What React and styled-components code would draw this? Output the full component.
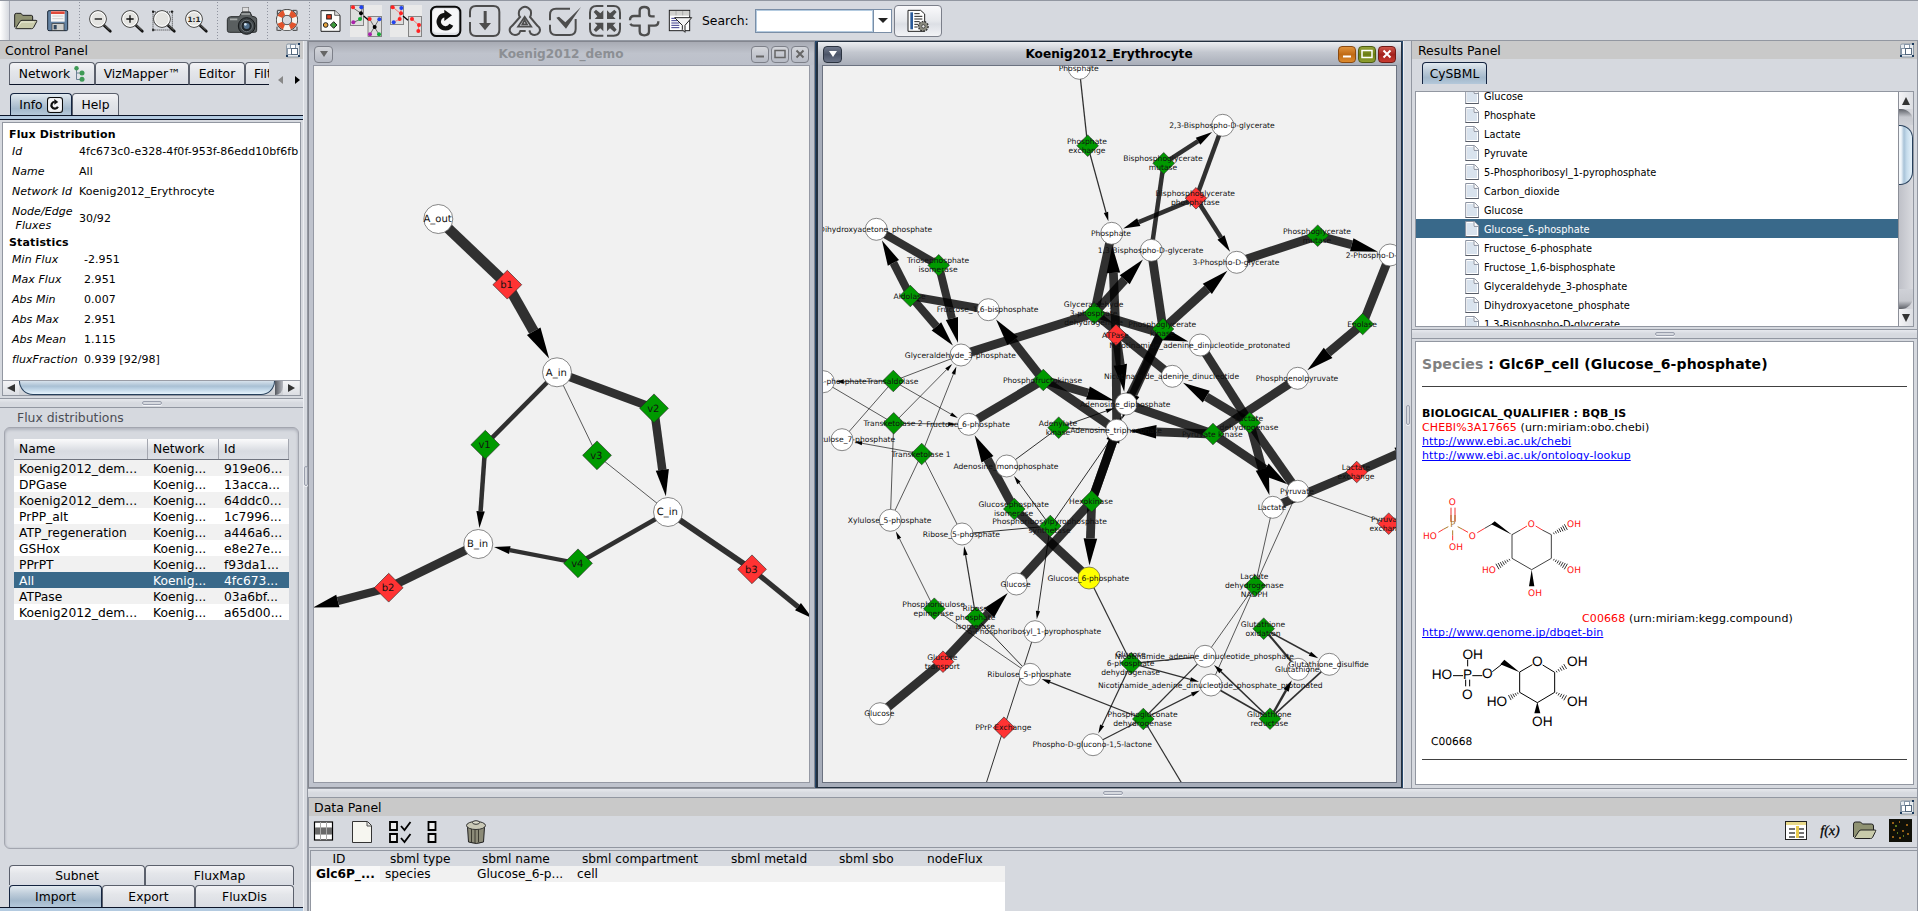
import React from "react";
import styled, { createGlobalStyle, css } from "styled-components";

const Global = createGlobalStyle`
  * { box-sizing: border-box; }
  html, body { margin: 0; background: #d6d9df; overflow: hidden; }
  body { font-family: "DejaVu Sans", sans-serif; font-size: 12.3px; color: #000; cursor: default; }
  svg { display: block; flex: none; }
  svg text { font-family: "DejaVu Sans", sans-serif; text-rendering: geometricPrecision; }
`;

const LINE = "#9297a1";
const SELECT = "#39698a";

/* ---------- frame ---------- */
const Page = styled.div`
  width: 1918px;
  height: 911px;
  display: flex;
  flex-direction: column;
  white-space: nowrap;
  overflow: hidden;
`;
const Body = styled.div`
  flex: 1;
  min-height: 0;
  display: flex;
`;
const Column = styled.div`
  display: flex;
  flex-direction: column;
  flex: 1;
  min-width: 0;
  border-right: 1px solid ${LINE};
`;
const TopArea = styled.div`
  display: flex;
  height: 747px;
`;
const VSplit = styled.div`
  width: ${(p) => p.$w}px;
  flex: none;
  display: flex;
  align-items: center;
  justify-content: center;
  background: #d6d9df;
  border-left: 1px solid #eceef2;
  border-right: 1px solid ${LINE};
`;
const HSplit = styled.div`
  height: ${(p) => p.$h}px;
  flex: none;
  display: flex;
  align-items: center;
  justify-content: center;
  background: linear-gradient(#e6e8ed, #d6d9df 4px);
  border-top: 1px solid ${LINE};
  border-bottom: 1px solid ${LINE};
`;
const Grip = styled.div`
  flex: none;
  border: 1px solid #9a9fad;
  border-radius: 2px;
  background: #d6d9df;
  box-shadow: 0 1px 0 #f4f5f8;
  ${(p) => (p.$v ? "width:4px;height:20px;" : "width:20px;height:4px;")}
`;

/* ---------- toolbar ---------- */
const Bar = styled.div`
  height: 41px;
  flex: none;
  display: flex;
  align-items: center;
  background: #d6d9df;
  border-top: 1px solid ${LINE};
  border-bottom: 1px solid ${LINE};
`;
const Handle = styled.div`
  width: 10px;
  height: 39px;
  background: linear-gradient(90deg, #fff, #d6d9df);
  border-right: 1px solid #a9adb8;
`;
const Separator = styled.div`
  width: 1px;
  height: 37px;
  background: repeating-linear-gradient(#8f939e 0 1px, transparent 1px 3px);
`;
const SearchLabel = styled.span`
  width: 59px;
  padding-left: 6px;
  font-size: 12.4px;
`;
const SearchInput = styled.div`
  width: 119px;
  height: 24px;
  background: #fff;
  border: 1px solid #7a8ea6;
  box-shadow: inset 0 0 0 1px #b4cbe0;
`;
const SearchDrop = styled.div`
  width: 18px;
  height: 24px;
  background: #fff;
  border: 1px solid #7a8ea6;
  border-left: 0;
  display: flex;
  align-items: center;
  justify-content: center;
`;
const ToolButton = styled.div`
  width: 48px;
  height: 32px;
  margin-left: 2px;
  border: 1px solid #7b7f8a;
  border-radius: 4px;
  background: linear-gradient(#fafafc, #e6e8ec 50%, #dcdfe5 60%, #f2f3f6);
  display: flex;
  align-items: center;
  justify-content: center;
`;

/* ---------- panels ---------- */
const PanelTitle = styled.div`
  height: ${(p) => p.$h || 18}px;
  flex: none;
  display: flex;
  align-items: center;
  justify-content: space-between;
  padding: 0 3px 0 ${(p) => p.$pl || 5}px;
  background: #c9c9c9;
  font-size: 12.5px;
`;
const Left = styled.div`
  width: 303px;
  flex: none;
  display: flex;
  flex-direction: column;
  overflow: hidden;
`;
const TabRow = styled.div`
  display: flex;
  flex: none;
  height: ${(p) => p.$h || 23}px;
  margin: ${(p) => p.$m || 0};
`;
const Tab = styled.div`
  width: ${(p) => p.$w}px;
  flex: none;
  display: flex;
  align-items: center;
  justify-content: center;
  gap: 4px;
  border: 1px solid #5b606c;
  border-bottom: ${(p) => (p.$open ? "0" : "1px solid #0c1428")};
  border-radius: 4px 4px 0 0;
  overflow: hidden;
  background: linear-gradient(#f3f3f6, #e4e6ea 40%, #d9dce3);
  ${(p) =>
    p.$on &&
    css`
      background: linear-gradient(#e2eaf0, #c0cedb 35%, #a3b8cb 70%, #b4c8da);
      border-color: #142440;
      border-bottom: 0;
    `}
  ${(p) =>
    p.$cut &&
    css`
      border-right: 0;
      border-radius: 4px 0 0 0;
      justify-content: flex-start;
      padding-left: 8px;
    `}
`;
const TabEdge = styled.div`
  height: 5px;
  flex: none;
  background: #b3cae0;
  border-top: 1px solid #0c1428;
  border-bottom: 1px solid #0c1428;
`;
const TabArrows = styled.div`
  display: flex;
  gap: 8px;
  padding: 14px 0 0 8px;
`;

const InfoBox = styled.div`
  width: 299px;
  height: 274px;
  margin: 2px 0 2px 2px;
  flex: none;
  border: 1px solid ${LINE};
  background: #fff;
  display: flex;
  flex-direction: column;
  font-size: 11px;
  overflow: hidden;
`;
const InfoText = styled.div`
  flex: 1;
  padding: 5px 0 0 6px;
`;
const InfoHead = styled.div`
  height: 14px;
  line-height: 14px;
  font-weight: bold;
  font-size: 11px;
  letter-spacing: 0.15px;
`;
const InfoRow = styled.div`
  display: flex;
  align-items: center;
  height: ${(p) => p.$h || 20}px;
  line-height: 14px;
  padding-left: 3px;
  letter-spacing: 0.05px;
`;
const InfoKey = styled.span`
  width: ${(p) => p.$w}px;
  font-style: italic;
  white-space: pre;
`;

const GroupTitle = styled.div`
  height: 19px;
  line-height: 19px;
  flex: none;
  padding-left: 17px;
  color: #4b4d55;
  font-size: 12.4px;
`;
const Group = styled.div`
  width: 295px;
  height: 422px;
  margin-left: 4px;
  flex: none;
  padding: 11px 0 0 9px;
  border: 1px solid #a3a6af;
  border-radius: 6px;
  box-shadow: inset 0 2px 3px #b4b7c0, inset 0 0 2px #b4b7c0;
`;
const Table = styled.div`
  width: 275px;
`;
const Row = styled.div`
  display: grid;
  grid-template-columns: 134px 71px 70px;
  height: 16px;
  line-height: 16px;
  background: ${(p) => (p.$on ? SELECT : p.$odd ? "#fff" : "#f1f1f1")};
  color: ${(p) => (p.$on ? "#fff" : "#000")};
  span { padding: 1px 0 0 5px; }
`;
const HeadRow = styled(Row)`
  height: 21px;
  line-height: 19px;
  background: linear-gradient(#fbfbfc, #d8dbe1 60%, #dde0e6);
  border-bottom: 1px solid #70747f;
  span { border-right: 1px solid #a4a7b0; }
`;
const BottomTabs = styled.div`
  margin: 16px 0 0 9px;
  width: 286px;
`;

/* ---------- scrollbars ---------- */
const HScroll = styled.div`
  height: 15px;
  display: flex;
  align-items: stretch;
  border-top: 1px solid #9a9da6;
  background: linear-gradient(#e7e8eb, #cfd1d6);
`;
const HThumb = styled.div`
  width: 256px;
  border: 1px solid #27405c;
  border-top: 0;
  border-radius: 0 0 14px 14px;
  background: linear-gradient(#d7e2ec, #a9c0d4 40%, #bcd2e4 60%, #e6f3fc);
`;
const HShade = styled.div`
  width: 8px;
  background: linear-gradient(90deg, #55585f, #b9bbc2);
  border-radius: 0 0 8px 0;
`;
const ScrollBtn = styled.div`
  flex: none;
  display: flex;
  align-items: center;
  justify-content: center;
  ${(p) => (p.$v ? "height:17px;" : "width:16px;")}
  background: linear-gradient(${(p) => (p.$v ? "90deg," : "")} #f4f4f6, #dcdee3);
`;
const VScroll = styled.div`
  width: 15px;
  flex: none;
  display: flex;
  flex-direction: column;
  border-left: 1px solid #8c8f98;
  background: linear-gradient(90deg, #bfc1c8, #d9dadf);
`;
const VShade = styled.div`
  height: ${(p) => p.$h}px;
  background: linear-gradient(${(p) => (p.$up ? "0deg" : "180deg")}, #5d6067, #c6c8ce 8px, #cfd1d7);
  border-radius: ${(p) => (p.$up ? "0 0 12px 0" : "0 12px 0 0")};
`;
const VThumb = styled.div`
  height: 60px;
  border: 1px solid #27405c;
  border-left: 0;
  border-radius: 0 13px 13px 0;
  background: linear-gradient(90deg, #f2f7fb 0 2px, #a9c3d8 5px, #c6dcec 60%, #e4f1fa);
`;

/* ---------- internal windows ---------- */
const Desktop = styled.div`
  width: 1095px;
  flex: none;
  display: flex;
  background: #28486b;
`;
const Win = styled.div`
  width: ${(p) => p.$w}px;
  height: 747px;
  margin-right: ${(p) => (p.$active ? 0 : 1)}px;
  border: 1px solid ${(p) => (p.$active ? "#23303f" : "#83868f")};
  border-left-width: ${(p) => (p.$active ? 2 : 1)}px;
  border-radius: ${(p) => (p.$active ? "4px 4px 0 0" : "0")};
  background: ${(p) => (p.$active ? "#a7adba" : "#bfc3cd")};
  padding: 0 4px 4px;
`;
const WinTitle = styled.div`
  height: 23px;
  margin: 0 -4px;
  padding: 1px 5px 0;
  display: flex;
  align-items: center;
  background: ${(p) => (p.$active ? "linear-gradient(#eceef1, #c3c7cf 45%, #a9aeb9)" : "linear-gradient(#a8abb4, #bfc3cc 50%, #bcc0ca)")};
  span {
    flex: 1;
    text-align: center;
    font-weight: bold;
    font-size: 12.15px;
    padding-left: 38px;
    color: ${(p) => (p.$active ? "#000" : "#8c8f94")};
  }
`;
const WinBtn = styled.div`
  width: ${(p) => p.$w || 18}px;
  height: 17px;
  flex: none;
  margin-left: ${(p) => p.$ml || 0}px;
  border-radius: 4px;
  border: 1px solid ${(p) => p.$bd};
  background: ${(p) => p.$bg};
  display: flex;
  align-items: center;
  justify-content: center;
`;
const Canvas = styled.div`
  height: 718px;
  border: 1px solid ${(p) => (p.$active ? "#6b7280" : "#9599a4")};
  background: #f1f1f1;
  overflow: hidden;
`;

/* ---------- results ---------- */
const Results = styled.div`
  flex: 1;
  min-width: 0;
  display: flex;
  flex-direction: column;
`;
const TreeBox = styled.div`
  width: 499px;
  height: 236px;
  margin: 7px 0 2px 3px;
  flex: none;
  border: 1px solid ${LINE};
  background: #fff;
  display: flex;
  overflow: hidden;
`;
const Tree = styled.div`
  flex: 1;
  margin-top: -6px;
`;
const TreeRow = styled.div`
  height: 19px;
  display: flex;
  align-items: center;
  gap: 5px;
  padding: 1px 0 0 49px;
  font-size: 9.8px;
  background: ${(p) => (p.$on ? SELECT : "#fff")};
  color: ${(p) => (p.$on ? "#fff" : "#000")};
  span { padding-top: 1px; }
`;
const Detail = styled.div`
  width: 499px;
  height: 444px;
  margin: 2px 0 0 3px;
  flex: none;
  border: 1px solid ${LINE};
  background: #fff;
  padding: 13px 6px 0;
  font-size: 11px;
  line-height: 14px;
`;
const DetailTitle = styled.div`
  height: 19px;
  line-height: 19px;
  font-size: 14px;
  font-weight: bold;
  letter-spacing: 0.12px;
  white-space: pre;
  em { font-style: normal; color: #808080; }
`;
const Rule = styled.div`
  height: 1px;
  width: 485px;
  background: #404040;
  margin: ${(p) => p.$m};
`;
const Line = styled.div`
  height: 14px;
  letter-spacing: 0.1px;
  b { letter-spacing: 0.12px; }
  i { font-style: normal; color: #f00; }
`;
const Link = styled.a`
  color: #00f;
  text-decoration: underline;
  text-underline-offset: 1px;
  text-decoration-skip-ink: none;
`;
const Figure = styled.div`
  display: flex;
  align-items: flex-end;
  height: ${(p) => p.$h}px;
`;

/* ---------- data panel ---------- */
const Data = styled.div`
  flex: 1;
  display: flex;
  flex-direction: column;
  border-left: 1px solid ${LINE};
`;
const DataTools = styled.div`
  height: 32px;
  flex: none;
  display: flex;
  align-items: center;
  border-bottom: 1px solid ${LINE};
`;
const DataBody = styled.div`
  flex: 1;
  margin: 2px 0 0 1px;
  border-top: 1px solid ${LINE};
  border-left: 1px solid ${LINE};
`;
const DataGrid = styled.div`
  width: 694px;
  height: 60px;
  background: #fff;
`;
const DataRow = styled.div`
  display: grid;
  grid-template-columns: 69px 92px 100px 149px 108px 88px 88px;
  height: ${(p) => (p.$head ? 15 : 16)}px;
  line-height: 15px;
  font-size: 12.2px;
  background: ${(p) => (p.$head ? "#d6d9df" : "#f1f1f1")};
  span { padding: 1px 0 0 ${(p) => (p.$head ? 10 : 5)}px; }
  span:first-child {
    ${(p) => (p.$head ? "text-align:center;padding:1px 13px 0 0;" : "font-weight:bold;background:#f8f8f8;")}
  }
`;
const Spacer = styled.div`
  flex: 1;
`;

/* ---------- icons: each strip is drawn on a 3x grid ---------- */
const Icon = ({ x, w, y = 3, h = 117, children }) => (
  <svg width={w / 3} height={h / 3} viewBox={`${x} ${y} ${w} ${h}`}>{children}</svg>
);
const Lens = ({ cx, children }) => (
  <g>
    <path d={`M${cx + 17} 75L${cx + 37} 94`} stroke="#111" strokeWidth="8" strokeLinecap="round" />
    <path d={`M${cx + 19} 75L${cx + 35} 90`} stroke="#8a8a86" strokeWidth="2.5" />
    <circle cx={cx} cy="57" r="25" fill="#e4e4e1" stroke="#3a3a38" strokeWidth="3" />
    <circle cx={cx} cy="57" r="21.500" fill="none" stroke="#fff" strokeWidth="3" />
    {children}
  </g>
);
const Dot = ({ x, y, c, r = 6 }) => <circle cx={x} cy={y} r={r} fill={c} />;
const CBadge = ({ x, y, s }) => (
  <g transform={`translate(${x} ${y}) scale(${s / 94})`}>
    <rect x="3" y="3" width="88" height="88" rx="16" fill="#dfe1e5" stroke="#0a0a0a" strokeWidth="6" />
    <rect x="9" y="9" width="76" height="72" rx="12" fill="#f6f6f8" />
    <path d="M64 57A20 20 0 1 1 45 28" fill="none" stroke="#111" strokeWidth="13" />
    <path d="M43 12L66 29L43 46Z" fill="#111" />
  </g>
);
const FloatIcon = () => (
  <svg width="14" height="15" viewBox="0 0 14 15">
    <rect x=".5" y="1" width="13" height="13" rx="1.500" fill="#e6eaee" stroke="#8c99a6" />
    <rect x="4.500" y="1.500" width="5" height="5" fill="#fff" stroke="#8797a8" />
    <rect x="1.500" y="5.500" width="5" height="6" fill="#fff" stroke="#8797a8" />
    <rect x="5.500" y="5.500" width="6" height="6" fill="#fff" stroke="#55697e" />
    <path d="M12 0h2v2h-2zM0 12h2v2H0zM12 12h2v2h-2z" fill="#1b3a5c" />
  </svg>
);
const Tri = ({ d, c = "#222", w = 8, h = 8 }) => (
  <svg width={w} height={h} viewBox="0 0 8 8"><path d={d} fill={c} /></svg>
);
const FileIcon = () => (
  <svg width="14" height="16" viewBox="0 0 14 16">
    <path d="M.7.5h8.800l4 4.200v10.800H.7z" fill="#fff" stroke="#8b92a0" />
    <path d="M2 2h6.500v4H12v8H2z" fill="#d9e3ee" />
    <path d="M9 1v4.400h4.200" fill="#fff" stroke="#8b92a0" />
    <path d="M.5 15.500h13.200" stroke="#565b66" />
  </svg>
);
const TreeIcon = () => (
  <svg width="11" height="16" viewBox="0 0 11 16">
    <path d="M2.500 2v11.500h5M2.500 7h5" fill="none" stroke="#6b8094" />
    <circle cx="2.500" cy="2.200" r="2.200" fill="#3f9a56" />
    <circle cx="8" cy="7" r="2.500" fill="#3f9a56" />
    <circle cx="8" cy="13.300" r="2.500" fill="#3f9a56" />
  </svg>
);

const G = "#4d4d4d";

function Toolbar() {
  return (
    <Bar>
      <Handle />
      <Icon x={30} w={96}>
        <path d="M44 82V45q0-5 5-5h14l5 6h26q4 0 4 5v12" fill="#8f9272" stroke="#222" strokeWidth="3" />
        <path d="M47 85L60 64q2-3 6-3h42q4 0 2 4l-9 17q-2 4-6 4H50q-4 0-3-1z" fill="#c9cbab" stroke="#222" strokeWidth="3" />
        <path d="M54 80l10-14h38" fill="none" stroke="#eceddb" strokeWidth="3" />
      </Icon>
      <Icon x={126} w={111}>
        <rect x="143" y="32" width="60" height="60" rx="4" fill="#6483a3" stroke="#1d2a3a" strokeWidth="3" />
        <rect x="153" y="33" width="41" height="32" fill="#f6f6f6" />
        <path d="M153 38h41" stroke="#e04a3b" strokeWidth="8" />
        <path d="M157 48h33M157 56h33" stroke="#b9b9b9" strokeWidth="2" />
        <rect x="156" y="71" width="36" height="20" fill="#cfd0cd" stroke="#333" strokeWidth="2" />
        <rect x="161" y="75" width="9" height="13" fill="#31475e" />
      </Icon>
      <Separator />
      <Icon x={240} w={108}><Lens cx={294}><path d="M284 57h22" stroke="#111" strokeWidth="4" /></Lens></Icon>
      <Icon x={348} w={96}><Lens cx={390}><path d="M379 57h22M390 46v22" stroke="#111" strokeWidth="4" /></Lens></Icon>
      <Icon x={444} w={96}>
        <rect x="459" y="36" width="58" height="54" fill="none" stroke="#111" strokeWidth="2.500" strokeDasharray="3 3" />
        <Lens cx={486} />
        <path d="M456 35h8M512 35h8M456 90h8M516 31v8M459 31v8M459 86v8" stroke="#111" strokeWidth="3" />
      </Icon>
      <Icon x={540} w={111}>
        <Lens cx={582}><text x="582" y="65" fontSize="22" fontWeight="bold" textAnchor="middle" fill="#222">1:1</text></Lens>
      </Icon>
      <Separator />
      <Icon x={654} w={147}>
        <rect x="728" y="22" width="18" height="14" fill="#ddd" stroke="#777" strokeWidth="2" />
        <path d="M726 36l-8 14h-26q-9 0-10 9v32q0 6 6 6h76q6 0 6-6V58q0-7-8-8l-6-1-6-13z" fill="#5a5f60" stroke="#2a2d2e" strokeWidth="3" />
        <path d="M690 58h22M724 42h26" stroke="#a9adac" strokeWidth="5" />
        <circle cx="740" cy="78" r="25" fill="#3e4447" stroke="#16191b" strokeWidth="3" />
        <circle cx="740" cy="78" r="17" fill="#20262a" stroke="#8c9498" strokeWidth="2" />
        <circle cx="740" cy="78" r="9" fill="#52708c" />
        <circle cx="736" cy="73" r="4" fill="#cfe0ee" />
      </Icon>
      <Separator />
      <Icon x={804} w={123}>
        <path d="M832 31h12M878 31h12M832 91h12M878 91h12M832 32v12M891 32v12M831 80v12M891 80v12" stroke="#3a3a3a" strokeWidth="3" />
        <circle cx="861" cy="60" r="23" fill="none" stroke="#333" strokeWidth="20" />
        <circle cx="861" cy="60" r="23" fill="none" stroke="#f6f4ee" strokeWidth="16" />
        <circle cx="861" cy="60" r="23" fill="none" stroke="#e2532b" strokeWidth="16" strokeDasharray="18 18.130" strokeDashoffset="-9" />
        <circle cx="861" cy="60" r="14" fill="#d6d9df" stroke="#333" strokeWidth="2" />
      </Icon>
      <Separator />
      <Icon x={930} w={105}>
        <path d="M963 32h42l15 14v48h-57z" fill="#fdfdfb" stroke="#222" strokeWidth="3" />
        <path d="M1004 32v14h16" fill="#ddd" stroke="#222" strokeWidth="2" />
        <rect x="980" y="44" width="14" height="13" fill="#e63d1c" stroke="#222" strokeWidth="3" />
        <circle cx="977" cy="75" r="7" fill="#e7a53c" stroke="#222" strokeWidth="3" />
        <path d="M1001 65l10 10-10 10-10-10z" fill="#3c9a3a" stroke="#222" strokeWidth="3" />
      </Icon>
      <Icon x={1035} w={123}>
        <rect x="1050" y="15" width="96" height="96" fill="#e9e9e9" />
        <rect x="1051" y="17" width="40" height="59" fill="#ddd" stroke="#555" strokeWidth="2" />
        <rect x="1104" y="50" width="41" height="59" fill="#ddd" stroke="#555" strokeWidth="2" />
        <path d="M1057 22l26 18 1 17-24 10M1083 40l4-16M1109 57l14 24 14-23M1123 81l-13 22M1123 81l14 22" fill="none" stroke="#333" strokeWidth="2" />
        <path d="M1091 48l15 13" stroke="#000" strokeWidth="4" />
        <Dot x={1059} y={22} c="#f22" /><Dot x={1084} y={22} c="#24e" /><Dot x={1083} y={40} c="#000" />
        <Dot x={1080} y={57} c="#1a3" /><Dot x={1060} y={67} c="#a2a" />
        <Dot x={1109} y={57} c="#f22" /><Dot x={1138} y={58} c="#24e" /><Dot x={1124} y={81} c="#000" />
        <Dot x={1110} y={103} c="#a2a" /><Dot x={1137} y={103} c="#1a3" />
      </Icon>
      <Icon x={1158} w={120}>
        <rect x="1170" y="15" width="96" height="96" fill="#e9e9e9" />
        <rect x="1172" y="17" width="38" height="57" fill="#ddd" stroke="#555" strokeWidth="2" />
        <rect x="1225" y="50" width="40" height="59" fill="#ddd" stroke="#555" strokeWidth="2" />
        <path d="M1179 22l22 18-2 17-18 10M1201 40l4-16M1236 57l20 18-1 18" fill="none" stroke="#f44" strokeWidth="2" />
        <path d="M1209 48l15 13" stroke="#000" strokeWidth="4" />
        <Dot x={1178} y={22} c="#f22" /><Dot x={1204} y={24} c="#24e" /><Dot x={1203} y={40} c="#f22" />
        <Dot x={1199} y={57} c="#f22" /><Dot x={1181} y={67} c="#24e" />
        <Dot x={1236} y={57} c="#f22" /><Dot x={1257} y={75} c="#f22" /><Dot x={1255} y={93} c="#f22" />
      </Icon>
      <Icon x={1278} w={117}><CBadge x={1290} y={17} s={94} /></Icon>
      <Icon x={1395} w={120}>
        <path d="M1410 52V36q0-18 18-18h52q18 0 18 18v54q0 18-18 18h-52q-18 0-18-18V66" fill="none" stroke={G} strokeWidth="6" />
        <path d="M1451 33h9v36h13l-18 22-18-22h14z" fill={G} />
      </Icon>
      <Icon x={75} w={120}>
        <path d="M118 31q17-21 34 0q3 13-2 20l22 26q12 8 6 20q-10 14-26 4l-4-10M118 31q-4 14 2 20L97 77q-12 8-6 20q10 14 26 4l4-8h16" fill="none" stroke={G} strokeWidth="6" />
        <path d="M134 50l20 30h-40zM134 60l-7 13h14z" fill="none" stroke={G} strokeWidth="5" />
      </Icon>
      <Icon x={195} w={120}>
        <path d="M210 61V44q0-18 18-18h42M287 57v30q0 18-18 18h-41q-18 0-18-18V74" fill="none" stroke={G} strokeWidth="6" />
        <path d="M229 53l8-3 19 17 47-46-45 65z" fill={G} />
      </Icon>
      <Icon x={315} w={120}>
        <path d="M370 18h-20q-20 0-20 20v20M381 18h20q19 0 19 20v20M370 107h-20q-20 0-20-20V68M381 107h20q19 0 19-20V68" fill="none" stroke={G} strokeWidth="6" />
        <path d="M370 57h-26l8-8-11-13 7-7 13 11 9-9zM381 57h26l-8-8 11-13-7-7-13 11-9-9zM370 68h-26l8 8-11 13 7 7 13-11 9 9zM381 68h26l-8 8 11 13-7 7-13-11-9 9z" fill={G} />
      </Icon>
      <Icon x={435} w={120}>
        <path d="M450 61q0-13 12-13h17V32q0-11 14-11t14 11v9q0 8 8 8h9M535 64q0 13-12 13h-16v17q0 12-14 12t-14-12V77h-17q-8 0-11-6" fill="none" stroke={G} strokeWidth="7" />
      </Icon>
      <Icon x={555} w={93}>
        <rect x="568" y="31" width="61" height="61" fill="#fff" stroke="#222" strokeWidth="3" />
        <rect x="570" y="33" width="58" height="14" fill="#d2d2cf" />
        <path d="M588 33v13M608 33v13" stroke="#999" strokeWidth="2" />
        <path d="M574 55h14M574 62h18M574 69h24M574 76h24M574 83h24" stroke="#3a3a8a" strokeWidth="3" />
        <path d="M584 53h51l-20 23v21l-8-8V76z" fill="#f4f4f4" stroke="#222" strokeWidth="3" />
      </Icon>
      <SearchLabel>Search:</SearchLabel>
      <SearchInput />
      <SearchDrop><svg width="12" height="7" viewBox="0 0 12 7"><path d="M1 1h10L6 6z" fill="#222" /></svg></SearchDrop>
      <ToolButton>
        <Icon x={1288} w={69} y={28} h={72}>
          <path d="M1291 32h38l12 11v52h-50z" fill="#fff" stroke="#222" strokeWidth="3" />
          <rect x="1298" y="38" width="8" height="51" fill="#2a5a9a" />
          <path d="M1310 42h16M1310 50h24M1310 58h24M1310 66h16M1310 74h12M1310 82h10" stroke="#222" strokeWidth="3" />
          <circle cx="1337" cy="80" r="14" fill="#8b8b80" stroke="#333" strokeWidth="5" strokeDasharray="5 3.500" />
          <circle cx="1337" cy="80" r="12" fill="#8b8b80" />
          <circle cx="1337" cy="80" r="5" fill="#e8e8e8" stroke="#222" strokeWidth="2" />
        </Icon>
      </ToolButton>
    </Bar>
  );
}

/* ---------- network drawing ---------- */
const isPoint = (v) => Array.isArray(v);

function Edge({ a, b, w, arrow, r }) {
  const dx = b[0] - a[0];
  const dy = b[1] - a[1];
  const len = Math.hypot(dx, dy);
  const ux = dx / len;
  const uy = dy / len;
  if (!arrow) return <path d={`M${a[0]} ${a[1]}L${b[0]} ${b[1]}`} stroke="#000" strokeOpacity=".8" strokeWidth={w} />;
  const tx = b[0] - ux * r;
  const ty = b[1] - uy * r;
  const al = 2.4 * w + 6;
  const hw = (1.2 * w + 3) / 2;
  const bx = tx - ux * al;
  const by = ty - uy * al;
  return (
    <g>
      <path d={`M${a[0]} ${a[1]}L${bx} ${by}`} stroke="#000" strokeOpacity=".8" strokeWidth={w} />
      <path d={`M${tx} ${ty}L${bx - uy * hw} ${by + ux * hw}L${bx + uy * hw} ${by - ux * hw}Z`} />
    </g>
  );
}

function Network({ box, nodes, edges, r, d, fs, lh }) {
  const at = (k) => (isPoint(k) ? k : nodes[k]);
  return (
    <svg width={box[2]} height={box[3]} viewBox={box.join(" ")}>
      {edges.map(([a, b, w, arrow], i) => (
        <Edge key={i} a={at(a)} b={at(b)} w={w} arrow={arrow} r={isPoint(b) ? 0 : r + 1.500} />
      ))}
      {Object.entries(nodes).map(([k, [x, y, type]]) =>
        type === "c" || type === "y" ? (
          <circle key={k} cx={x} cy={y} r={r} fill={type === "y" ? "#ff0" : "#fff"} stroke="#555" strokeWidth=".7" />
        ) : (
          <path key={k} d={`M${x} ${y - d}L${x + d} ${y}L${x} ${y + d}L${x - d} ${y}Z`} fill={type === "r" ? "#f33" : "#090"} stroke="#222" strokeWidth=".6" />
        )
      )}
      {Object.entries(nodes).map(([k, [x, y, , label]]) => {
        const lines = label.split("|");
        return lines.map((t, i) => (
          <text key={k + i} x={x - 0.7} y={y + fs * 0.34 + (i - (lines.length - 1) / 2) * lh} fontSize={fs} textAnchor="middle" fill="#111">{t}</text>
        ));
      })}
    </svg>
  );
}

const demoNodes = {
  Ao: [438.3, 219, "c", "A_out"], b1: [507.3, 284.7, "r", "b1"], A: [557, 372.3, "c", "A_in"],
  v1: [485.3, 444.7, "g", "v1"], v2: [654, 408.3, "g", "v2"], v3: [597, 455.3, "g", "v3"],
  C: [668, 512, "c", "C_in"], B: [478.3, 544, "c", "B_in"], v4: [578, 563.3, "g", "v4"],
  b2: [388.7, 587.7, "r", "b2"], b3: [752, 569.3, "r", "b3"],
};
const demoEdges = [
  ["Ao", "b1", 10.5], ["b1", "A", 10.5, 1], ["A", "v2", 8.5], ["v2", "C", 8.5, 1],
  ["A", "v1", 4.5], ["v1", "B", 4.5, 1], ["A", "v3", 0.8], ["v3", "C", 0.8],
  ["C", "v4", 4.5], ["v4", "B", 4.2, 1], ["B", "b2", 8.7], ["b2", [313, 607.5], 8.2, 1],
  ["C", "b3", 5.8], ["b3", [812.5, 618.5], 5.3, 1],
];

const eryNodes = {
  PhT: [1079.3, 68.3, "c", "Phosphate"], DHAP: [876.3, 229.3, "c", "Dihydroxyacetone_phosphate"],
  F16: [988.3, 309.7, "c", "Fructose_1,6-bisphosphate"], G3P: [961, 355, "c", "Glyceraldehyde_3-phosphate"],
  E4P: [823.3, 381.7, "c", "Erythrose_4-phosphate"], Pi: [1111.7, 233.3, "c", "Phosphate"],
  B13: [1151.3, 250.3, "c", "1,3-Bisphospho-D-glycerate"], B23: [1222.7, 125.3, "c", "2,3-Bisphospho-D-glycerate"],
  P3G: [1236.7, 262.3, "c", "3-Phospho-D-glycerate"], P2G: [1390, 255, "c", "2-Phospho-D-glycerate"],
  PEP: [1297.7, 378.3, "c", "Phosphoenolpyruvate"],
  NADH: [1200.3, 345, "c", "Nicotinamide_adenine_dinucleotide_protonated"],
  NAD: [1172.3, 376.3, "c", "Nicotinamide_adenine_dinucleotide"],
  ADP: [1126, 404, "c", "Adenosine_diphosphate"], ATP: [1116.7, 430.3, "c", "Adenosine_triphosphate"],
  F6P: [968.7, 424.3, "c", "Fructose_6-phosphate"], S7P: [842, 439.7, "c", "Sedoheptulose_7-phosphate"],
  AMP: [1006.7, 466, "c", "Adenosine_monophosphate"], Xyl: [890.3, 520.3, "c", "Xylulose_5-phosphate"],
  R5P: [962, 534, "c", "Ribose_5-phosphate"], Glc: [1016.3, 584, "c", "Glucose"],
  G6P: [1089, 578, "y", "Glucose_6-phosphate"], PRPP: [1035, 631.7, "c", "5-Phosphoribosyl_1-pyrophosphate"],
  Ru5P: [1030, 674.3, "c", "Ribulose_5-phosphate"], GlcO: [880, 713.7, "c", "Glucose"],
  PGL: [1093, 744.7, "c", "Phospho-D-glucono-1,5-lactone"], Lac: [1272.7, 507.3, "c", "Lactate"],
  Pyr: [1297.7, 491.3, "c", "Pyruvate"],
  NADP: [1205, 656.3, "c", "Nicotinamide_adenine_dinucleotide_phosphate"],
  NADPH: [1211, 685, "c", "Nicotinamide_adenine_dinucleotide_phosphate_protonated"],
  GSH: [1298, 669.3, "c", "Glutathione"], GSSG: [1329.3, 664.3, "c", "Glutathione_disulfide"],
  PhEx: [1087.7, 145.7, "g", "Phosphate|exchange"], TPI: [938.7, 265.3, "g", "Triosephosphate|isomerase"],
  Ald: [910.3, 296, "g", "Aldolase"], GAPDH: [1094.3, 313.3, "g", "Glyceraldehyde|3-phosphate|dehydrogenase"],
  ATPase: [1116, 335, "r", "ATPase"], PFK: [1043.3, 380, "g", "Phosphofructokinase"],
  TA: [893.3, 381, "g", "Transaldolase"], BM: [1163.7, 163.3, "g", "Bisphosphoglycerate|mutase"],
  BP: [1196, 198.3, "r", "Bisphosphoglycerate|phosphatase"], PGK: [1163, 329, "g", "Phosphoglycerate|kinase"],
  PGM: [1317.7, 235.7, "g", "Phosphoglycerate|mutase"], Eno: [1362.7, 324, "g", "Enolase"],
  TK2: [893.7, 423.3, "g", "Transketolase 2"], TK1: [921.7, 454, "g", "Transketolase 1"],
  AK: [1058.7, 427.7, "g", "Adenylate|kinase"], GPI: [1014.3, 509, "g", "Glucosephosphate|isomerase"],
  PS: [1050.3, 526, "g", "Phosphoribosylpyrophosphate|synthetase"], HK: [1091.7, 501.3, "g", "Hexokinase"],
  PRE: [934.3, 608.7, "g", "Phosphoribulose|epimerase"], RPI: [976, 617.7, "g", "Ribose|phosphate|isomerase"],
  GlcT: [943, 661.7, "r", "Glucose|transport"], PPX: [1004, 727.7, "r", "PPrP Exchange"],
  PK: [1213, 434, "g", "Pyruvate kinase"], LDH: [1249.7, 422.7, "g", "Lactate|dehydrogenase"],
  LEx: [1356.7, 472, "r", "Lactate|exchange"], PEx: [1388.7, 523.7, "r", "Pyruvate|exchange"],
  LDP: [1255, 585.7, "g", "Lactate|dehydrogenase|NADPH"], GOx: [1263.7, 628.7, "g", "Glutathione|oxidation"],
  G6D: [1131.3, 663.3, "g", "Glucose|6-phosphate|dehydrogenase"],
  PGD: [1143.3, 719, "g", "Phosphogluconate|dehydrogenase"], GR: [1270, 718.7, "g", "Glutathione|reductase"],
};
const T = 8.8;
const eryEdges = [
  ["PhT", "PhEx", 1.3], ["PhEx", "Pi", 1.3, 1],
  ["DHAP", "TPI", 8], ["TPI", "G3P", 8, 1], ["Ald", "DHAP", 8, 1], ["Ald", "G3P", 8, 1], ["F16", "Ald", 8],
  ["PFK", "F16", T, 1], ["PFK", "ADP", T, 1], ["F6P", "PFK", T], ["ATP", "PFK", T],
  ["G3P", "GAPDH", T], ["Pi", "GAPDH", T], ["NAD", "GAPDH", T], ["GAPDH", "B13", T, 1], ["GAPDH", "NADH", T, 1],
  ["B13", "PGK", T], ["ADP", "PGK", T], ["PGK", "ATP", T, 1], ["PGK", "P3G", T, 1],
  ["B13", "BM", 4.5], ["BM", "B23", 4.5, 1], ["B23", "BP", 4.5], ["BP", "Pi", 4.5, 1], ["BP", "P3G", 4.5, 1],
  ["P3G", "PGM", T], ["PGM", "P2G", T, 1], ["P2G", "Eno", T], ["Eno", "PEP", T, 1],
  ["PEP", "PK", T], ["ADP", "PK", T], ["PK", "ATP", T, 1], ["PK", "Pyr", T, 1],
  ["Pyr", "LDH", T], ["NADH", "LDH", T], ["LDH", "NAD", T, 1], ["LDH", "Lac", T, 1],
  ["Lac", "LEx", T], ["LEx", [1422, 443], T, 1], ["Pyr", "PEx", 0.8],
  ["Lac", "LDP", 0.8], ["Pyr", "LDP", 0.8], ["LDP", "NADP", 0.8], ["LDP", "NADPH", 0.8],
  ["ATP", "ATPase", T], ["ATPase", "ADP", T, 1], ["ATPase", "Pi", T, 1],
  ["ATP", "HK", T], ["HK", "ADP", T, 1], ["Glc", "HK", T], ["HK", "G6P", T, 1],
  ["G6P", "GPI", T], ["GPI", "F6P", T, 1],
  ["AMP", "AK", 1], ["AK", "ADP", 1, 1], ["ATP", "AK", 1],
  ["R5P", "PS", 1], ["ATP", "PS", 1], ["PS", "AMP", 1, 1], ["PS", "PRPP", 1, 1],
  ["G3P", "TA", 0.8], ["TA", "F6P", 0.8, 1], ["S7P", "TA", 0.8], ["TA", "E4P", 0.8, 1],
  ["TK2", "G3P", 0.8, 1], ["TK2", "F6P", 0.8, 1], ["E4P", "TK2", 0.8], ["Xyl", "TK2", 0.8],
  ["TK1", "S7P", 0.8, 1], ["TK1", "G3P", 0.8, 1], ["Xyl", "TK1", 0.8], ["R5P", "TK1", 0.8],
  ["PRE", "Xyl", 0.8, 1], ["Ru5P", "PRE", 0.8], ["RPI", "R5P", 1.2, 1], ["Ru5P", "RPI", 1],
  ["GlcO", "GlcT", T], ["GlcT", "Glc", T, 1], ["PRPP", "PPX", 1], ["PPX", [985, 787], 1],
  ["G6P", "G6D", 1.2], ["G6D", "PGL", 1.2, 1], ["G6D", "NADPH", 1.2, 1], ["NADP", "G6D", 1.2],
  ["PGL", "PGD", 1.2], ["NADP", "PGD", 1.2], ["PGD", "NADPH", 1.2, 1], ["PGD", "Ru5P", 1.2, 1], ["PGD", [1184, 787], 1.2],
  ["NADPH", "GR", 1.7], ["GR", "NADP", 1.5, 1], ["GR", "GSH", 2.4, 1], ["GSSG", "GR", 1.7],
  ["GSH", "GOx", 2.2], ["GOx", "GSSG", 1.5, 1],
];

/* ---------- molecules ---------- */
const Hash = ({ x1, y1, x2, y2, n, c = "#000", s = 8 }) => {
  const l = Math.hypot(x2 - x1, y2 - y1);
  const ux = (x2 - x1) / l;
  const uy = (y2 - y1) / l;
  return Array.from({ length: n }, (_, i) => {
    const t = (i + 0.6) / n;
    const x = x1 + (x2 - x1) * t;
    const y = y1 + (y2 - y1) * t;
    const h = 2 + s * t;
    return <path key={i} d={`M${x - uy * h} ${y + ux * h}L${x + uy * h} ${y - ux * h}`} stroke={c} strokeWidth="2.4" />;
  });
};
const Atom = ({ x, y, s, c, children }) => (
  <text x={x} y={y + s * 0.36} fontSize={s} fill={c} textAnchor="middle">{children}</text>
);

const ChebiMolecule = () => (
  <svg width="160" height="163" viewBox="66 396 480 489">
    <g fill="none" strokeWidth="2.800">
      <path d="M153 530v42M165 530v42" stroke="#e22" />
      <path d="M153 552v20M165 552v20" stroke="#a5711c" />
      <path d="M145 587l-15 8M173 587l15 8M158 598v15" stroke="#a5711c" />
      <path d="M130 595l-15 9M188 595l16 9M158 613v15M232 605l22-13M407 585l20 12M381 585l-20 12" stroke="#f22" />
      <path d="M254 592l26-15M361 597l-25 14v71l59 34 59-34v-71l-27-14" stroke="#333" />
    </g>
    <path d="M336 611l-62-31 10-9z M395 716l-8 50h16z" fill="#000" />
    <Hash x1={458} y1={609} x2={500} y2={587} n={7} />
    <Hash x1={458} y1={684} x2={500} y2={708} n={7} />
    <Hash x1={332} y1={684} x2={290} y2={708} n={7} />
    <Atom x={157} y={512} s={27} c="#f11">O</Atom>
    <Atom x={158} y={578} s={25} c="#a5711c">P</Atom>
    <Atom x={90} y={614} s={27} c="#f11">HO</Atom>
    <Atom x={168} y={647} s={27} c="#f11">OH</Atom>
    <Atom x={217} y={614} s={27} c="#f11">O</Atom>
    <Atom x={394} y={578} s={27} c="#f11">O</Atom>
    <Atom x={522} y={578} s={27} c="#f11">OH</Atom>
    <Atom x={522} y={716} s={27} c="#f11">OH</Atom>
    <Atom x={267} y={716} s={27} c="#f11">HO</Atom>
    <Atom x={405} y={785} s={27} c="#f11">OH</Atom>
  </svg>
);
const KeggMolecule = () => (
  <svg width="178" height="108" viewBox="66 930 534 324">
    <g fill="none" stroke="#000" strokeWidth="3">
      <path d="M159 1040h30M217 1040h30M203 992v20M197 1052v20M209 1052v20M277 1028l36-28M359 1029l38-22M428 1008l36 22v60l-52 31-53-31v-61" />
    </g>
    <path d="M359 1030l-58-24 12-14zM412 1119l-9 34h18z" />
    <Hash x1={466} y1={1030} x2={498} y2={1011} n={5} s={7} />
    <Hash x1={466} y1={1090} x2={498} y2={1108} n={5} s={7} />
    <Hash x1={357} y1={1091} x2={327} y2={1107} n={5} s={7} />
    {[[218, 975, "OH"], [126, 1035, "HO"], [203, 1035, "P"], [262, 1034, "O"], [202, 1095, "O"], [412, 996, "O"],
      [532, 996, "OH"], [532, 1116, "OH"], [291, 1116, "HO"], [427, 1176, "OH"]].map(([x, y, t]) => (
      <text key={x + t + y} x={x} y={y + 14} fontSize="41" textAnchor="middle" style={{ fontFamily: "Liberation Sans" }}>{t}</text>
    ))}
    <text x="93" y="1247" fontSize="32">C00668</text>
  </svg>
);

/* ---------- data ---------- */
const fluxRows = [
  ["Koenig2012_dem...", "919e06..."], ["DPGase", "13acca..."], ["Koenig2012_dem...", "64ddc0..."], ["PrPP_alt", "1c7996..."],
  ["ATP_regeneration", "a446a6..."], ["GSHox", "e8e27e..."], ["PPrPT", "f93da1..."], ["All", "4fc673..."],
  ["ATPase", "03a6bf..."], ["Koenig2012_dem...", "a65d00..."],
];
const stats = [["Min Flux", "-2.951"], ["Max Flux", "2.951"], ["Abs Min", "0.007"], ["Abs Max", "2.951"], ["Abs Mean", "1.115"], ["fluxFraction", "0.939 [92/98]"]];
const species = ["Glucose", "Phosphate", "Lactate", "Pyruvate", "5-Phosphoribosyl_1-pyrophosphate", "Carbon_dioxide", "Glucose", "Glucose_6-phosphate",
  "Fructose_6-phosphate", "Fructose_1,6-bisphosphate", "Glyceraldehyde_3-phosphate", "Dihydroxyacetone_phosphate", "1,3-Bisphospho-D-glycerate"];

function ControlPanel() {
  return (
    <Left>
      <PanelTitle>Control Panel<FloatIcon /></PanelTitle>
      <TabRow $m="3px 0 0 9px" $h={23}>
        <Tab $w={86}>Network<TreeIcon /></Tab>
        <Tab $w={94}>VizMapper™</Tab>
        <Tab $w={56}>Editor</Tab>
        <Tab $w={24} $cut>Filt</Tab>
        <TabArrows><Tri d="M6 0v8L1 4z" c="#888" /><Tri d="M2 0v8L7 4z" c="#000" /></TabArrows>
      </TabRow>
      <TabRow $m="8px 0 0 10px" $h={22}>
        <Tab $w={62} $on>Info<svg width="16" height="16" viewBox="0 0 94 94"><CBadge x={0} y={0} s={94} /></svg></Tab>
        <Tab $w={47} $open>Help</Tab>
      </TabRow>
      <TabEdge />
      <InfoBox>
        <InfoText>
          <InfoHead>Flux Distribution</InfoHead>
          <InfoRow><InfoKey $w={67}>Id</InfoKey>4fc673c0-e328-4f0f-953f-86edd10bf6fb</InfoRow>
          <InfoRow><InfoKey $w={67}>Name</InfoKey>All</InfoRow>
          <InfoRow><InfoKey $w={67}>Network Id</InfoKey>Koenig2012_Erythrocyte</InfoRow>
          <InfoRow $h={34}><InfoKey $w={67}>{"Node/Edge\n Fluxes"}</InfoKey>30/92</InfoRow>
          <InfoHead>Statistics</InfoHead>
          {stats.map(([k, v]) => <InfoRow key={k}><InfoKey $w={72}>{k}</InfoKey>{v}</InfoRow>)}
        </InfoText>
        <HScroll>
          <ScrollBtn><Tri d="M8 0v8L0 4z" c="#333" /></ScrollBtn>
          <HThumb />
          <HShade />
          <ScrollBtn><Tri d="M1 0v8L8 4z" c="#333" /></ScrollBtn>
        </HScroll>
      </InfoBox>
      <HSplit $h={10}><Grip /></HSplit>
      <GroupTitle>Flux distributions</GroupTitle>
      <Group>
        <Table>
          <HeadRow><span>Name</span><span>Network</span><span>Id</span></HeadRow>
          {fluxRows.map(([n, id], i) => (
            <Row key={id} $odd={i % 2} $on={n === "All"}><span>{n}</span><span>Koenig...</span><span>{id}</span></Row>
          ))}
        </Table>
      </Group>
      <BottomTabs>
        <TabRow $h={20}><Tab $w={136} $open>Subnet</Tab><Tab $w={149} $open>FluxMap</Tab></TabRow>
        <TabRow $h={22}><Tab $w={93} $on>Import</Tab><Tab $w={93} $open>Export</Tab><Tab $w={99} $open>FluxDis</Tab></TabRow>
      </BottomTabs>
      <TabEdge />
    </Left>
  );
}

const gray = { $bd: "#7d8089", $bg: "linear-gradient(#d4d6db, #b6bac4)" };

function Windows() {
  return (
    <Desktop>
      <Win $w={507}>
        <WinTitle>
          <WinBtn $w={19} {...gray}><Tri d="M0 1h8L4 7z" c="#666" /></WinBtn>
          <span>Koenig2012_demo</span>
          <WinBtn {...gray}><svg width="10" height="10"><path d="M1 7.500h8" stroke="#666" strokeWidth="2" /></svg></WinBtn>
          <WinBtn $ml={2} {...gray}><svg width="12" height="10"><rect x="1" y="1.500" width="10" height="7" fill="none" stroke="#666" strokeWidth="1.500" /></svg></WinBtn>
          <WinBtn $ml={2} {...gray}><svg width="10" height="10"><path d="M1.500 1.500l7 7M8.500 1.500l-7 7" stroke="#666" strokeWidth="2" /></svg></WinBtn>
        </WinTitle>
        <Canvas>
          <Network box={[314, 66, 497, 716]} nodes={demoNodes} edges={demoEdges} r={14.5} d={14.4} fs={10} lh={12} />
        </Canvas>
      </Win>
      <Win $w={586} $active>
        <WinTitle $active>
          <WinBtn $w={19} $bd="#2b3340" $bg="linear-gradient(#6f788b, #4c5568 50%, #6b7488)"><Tri d="M0 1h8L4 7z" c="#fff" /></WinBtn>
          <span>Koenig2012_Erythrocyte</span>
          <WinBtn $bd="#8a4a10" $bg="linear-gradient(#e0923c, #c06a14 50%, #dc8a2e)"><svg width="10" height="10"><path d="M1 7.500h8" stroke="#fff" strokeWidth="2" /></svg></WinBtn>
          <WinBtn $ml={2} $bd="#4c5c12" $bg="linear-gradient(#93a23a, #6c7e14 50%, #8e9f30)"><svg width="12" height="10"><rect x="1" y="1.500" width="10" height="7" fill="none" stroke="#fff" strokeWidth="1.500" /></svg></WinBtn>
          <WinBtn $ml={2} $bd="#701a16" $bg="linear-gradient(#cf564c, #a3211c 50%, #c93a30)"><svg width="10" height="10"><path d="M1.500 1.500l7 7M8.500 1.500l-7 7" stroke="#fff" strokeWidth="2" /></svg></WinBtn>
        </WinTitle>
        <Canvas $active>
          <Network box={[823, 66, 573, 716]} nodes={eryNodes} edges={eryEdges} r={11} d={10.8} fs={7.6} lh={8.8} />
        </Canvas>
      </Win>
    </Desktop>
  );
}

function ResultsPanel() {
  return (
    <Results>
      <PanelTitle $pl={6}>Results Panel<FloatIcon /></PanelTitle>
      <TabRow $m="3px 0 0 10px" $h={22}><Tab $w={65} $on>CySBML</Tab></TabRow>
      <TreeBox>
        <Tree>
          {species.map((s, i) => <TreeRow key={i} $on={i === 7}><FileIcon /><span>{s}</span></TreeRow>)}
        </Tree>
        <VScroll>
          <ScrollBtn $v><Tri d="M4 0L8 8H0z" c="#333" /></ScrollBtn>
          <VShade $h={16} />
          <VThumb />
          <Spacer />
          <VShade $h={20} $up />
          <ScrollBtn $v><Tri d="M4 8L8 0H0z" c="#333" /></ScrollBtn>
        </VScroll>
      </TreeBox>
      <HSplit $h={10}><Grip /></HSplit>
      <Detail>
        <DetailTitle><em>Species</em>{" : Glc6P_cell (Glucose_6-phosphate)"}</DetailTitle>
        <Rule $m="12px 0 20px" />
        <Line><b>BIOLOGICAL_QUALIFIER : BQB_IS</b></Line>
        <Line><i>CHEBI%3A17665</i> (urn:miriam:obo.chebi)</Line>
        <Line><Link>http://www.ebi.ac.uk/chebi</Link></Line>
        <Line><Link>http://www.ebi.ac.uk/ontology-lookup</Link></Line>
        <Figure $h={163}>
          <ChebiMolecule />
          <Line><i>C00668</i> (urn:miriam:kegg.compound)</Line>
        </Figure>
        <Line><Link>http://www.genome.jp/dbget-bin</Link></Line>
        <Figure $h={107}><KeggMolecule /></Figure>
        <Rule $m="12px 0 0" />
      </Detail>
    </Results>
  );
}

function DataPanel() {
  return (
    <Data>
      <PanelTitle $h={18}>Data Panel<FloatIcon /></PanelTitle>
      <DataTools>
        <svg width="190" height="30" viewBox="309 817 190 30">
          <g fill="none" stroke="#000">
            <rect x="314.500" y="822" width="18" height="18" fill="#fff" strokeWidth="1.200" />
            <path d="M315 831h17" stroke="#6a6a6a" strokeWidth="6" />
            <path d="M320.500 822v18M326.500 822v18M315 827.500h17M315 834.500h17" stroke="#aaa" />
            <path d="M352.500 821.500h15l4 4v17h-19z" fill="#f6f6f0" stroke="#333" />
            <path d="M367 822v4h4" fill="#ddd" stroke="#555" />
            <g strokeWidth="1.800">
              <path d="M390 822h7v8h-7zM390 834h7v8h-7zM428.500 822h7v8h-7zM428.500 834h7v8h-7z" fill="#eee" />
              <path d="M401 826l3.500 4 6-8M401 838l3.500 4 6-8" />
            </g>
            <path d="M467.500 827l1 15q8 3 15 0l1-15" fill="#8c8b78" stroke="#222" />
            <path d="M471.500 829v13M475 829v14M478.500 829v13" stroke="#3c3b30" />
            <ellipse cx="476" cy="825.500" rx="9.500" ry="4" fill="#c9c8b6" stroke="#333" />
            <ellipse cx="476" cy="822.500" rx="3.500" ry="1.800" fill="#dddccc" stroke="#333" />
          </g>
        </svg>
        <Spacer />
        <svg width="136" height="30" viewBox="1781 815 136 30">
          <rect x="1785.500" y="819.500" width="21" height="18" fill="#fff" stroke="#222" />
          <path d="M1786 821.500h20" stroke="#e8d98a" strokeWidth="3" />
          <path d="M1789 827h6M1798 827h6M1789 831h6M1798 831h6M1789 835h6M1798 835h6" stroke="#444" strokeWidth="1.500" />
          <rect x="1796" y="824" width="3" height="12" fill="#e8c94a" />
          <text x="1830" y="833" fontSize="14" fontStyle="italic" textAnchor="middle" stroke="#000" strokeWidth=".3" style={{ fontFamily: "Liberation Serif" }}>f(x)</text>
          <path d="M1853.500 835v-13q0-2 2-2h5l2 2h9q2 0 2 2v4" fill="#8f9272" stroke="#222" />
          <path d="M1854.500 836l4.500-7q1-1 2-1h14q1.500 0 .5 1.500l-3 6q-.5 1-2 1h-15z" fill="#c9cbab" stroke="#222" />
          <rect x="1889" y="817" width="23" height="23" fill="#101008" />
          <path d="M1892 821h2M1899 820h1M1906 823h2M1893 828h2M1902 829h2M1907 832h2M1892 835h2M1899 836h2" stroke="#c07a1c" strokeWidth="1.500" />
          <path d="M1895 824h2M1903 834h1M1897 831h1" stroke="#7a9a20" strokeWidth="1.500" />
        </svg>
      </DataTools>
      <DataBody>
        <DataGrid>
          <DataRow $head><span>ID</span><span>sbml type</span><span>sbml name</span><span>sbml compartment</span><span>sbml metaId</span><span>sbml sbo</span><span>nodeFlux</span></DataRow>
          <DataRow><span>Glc6P_...</span><span>species</span><span>Glucose_6-p...</span><span>cell</span><span /><span /><span /></DataRow>
        </DataGrid>
      </DataBody>
    </Data>
  );
}

export default function App() {
  return (
    <Page>
      <Global />
      <Toolbar />
      <Body>
        <ControlPanel />
        <VSplit $w={5}><Grip $v /></VSplit>
        <Column>
          <TopArea>
            <Windows />
            <VSplit $w={9}><Grip $v /></VSplit>
            <ResultsPanel />
          </TopArea>
          <HSplit $h={10}><Grip /></HSplit>
          <DataPanel />
        </Column>
      </Body>
    </Page>
  );
}
